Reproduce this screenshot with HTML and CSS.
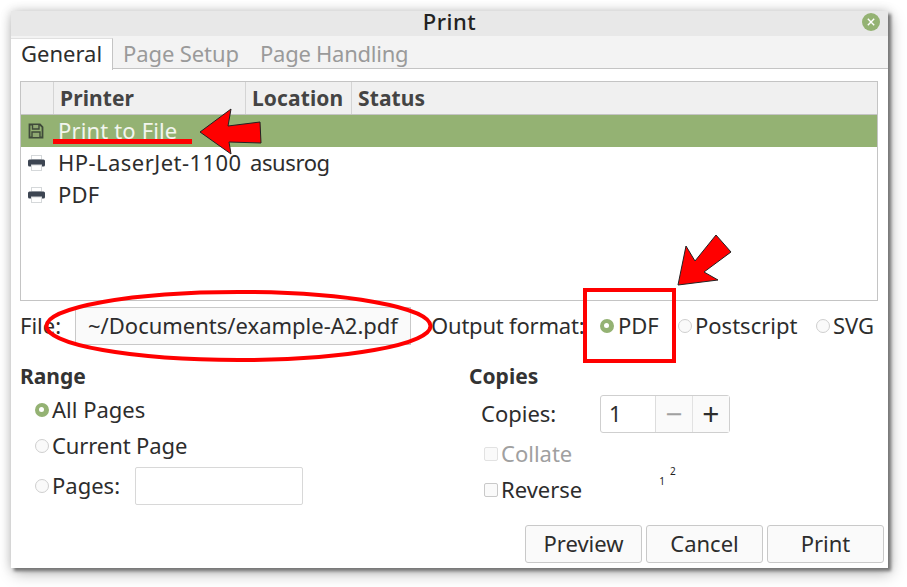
FILE: index.html
```html
<!DOCTYPE html>
<html lang="en">
<head>
<meta charset="utf-8">
<title>Print</title>
<link rel="stylesheet" href="styles.css">
</head>
<body>
<div class="dialog">
  <header class="titlebar">
    <span class="title">Print</span>
    <span class="close"><svg width="18" height="18" viewBox="0 0 18 18"><circle cx="9" cy="9" r="9" fill="#94b273"/><path d="M5.800 5.800l6.400 6.400M12.200 5.800l-6.400 6.400" stroke="#fff" stroke-width="1.400" fill="none"/></svg></span>
  </header>
  <nav class="tabs">
    <span class="tab tab-active">General</span>
    <span class="tab tab-setup">Page Setup</span>
    <span class="tab tab-handling">Page Handling</span>
  </nav>
  <main class="content">
    <section class="tree">
      <div class="tree-row tree-head">
        <span class="cell c-icon"></span>
        <span class="cell c-name">Printer</span>
        <span class="cell c-loc">Location</span>
        <span class="cell c-status">Status</span>
      </div>
      <div class="tree-row selected">
        <span class="cell c-icon"><svg width="16" height="16" viewBox="0 0 16 16"><path d="M1.500 1.500h10.500l2.500 2.500v10.500h-13z" fill="none" stroke="#3f4a3a" stroke-width="1.800"/><path d="M4.500 2v4h6.500v-4M4 14v-5h8v5" fill="#8fa872" stroke="#3f4a3a" stroke-width="1.400"/></svg></span>
        <span class="cell c-name">Print to File</span>
      </div>
      <div class="tree-row">
        <span class="cell c-icon"><svg width="17" height="16" viewBox="0 0 17 16"><rect x="3.500" y="0.500" width="10" height="4" fill="#fff" stroke="#d5d8da"/><rect x="0" y="4.500" width="17" height="7" rx="1.500" fill="#3d4552"/><rect x="3.500" y="10" width="10" height="5.500" fill="#fff" stroke="#d5d8da"/></svg></span>
        <span class="cell c-name name-wide">HP-LaserJet-1100</span>
        <span class="cell c-loc">asusrog</span>
      </div>
      <div class="tree-row">
        <span class="cell c-icon"><svg width="17" height="16" viewBox="0 0 17 16"><rect x="3.500" y="0.500" width="10" height="4" fill="#fff" stroke="#d5d8da"/><rect x="0" y="4.500" width="17" height="7" rx="1.500" fill="#3d4552"/><rect x="3.500" y="10" width="10" height="5.500" fill="#fff" stroke="#d5d8da"/></svg></span>
        <span class="cell c-name">PDF</span>
      </div>
    </section>

    <section class="file-row">
      <span class="file-label">File:</span>
      <span class="file-entry">~/Documents/example-A2.pdf</span>
      <span class="format-label">Output format:</span>
      <span class="radio on r-pdf"></span><span class="opt o-pdf">PDF</span>
      <span class="radio r-ps"></span><span class="opt o-ps">Postscript</span>
      <span class="radio r-svg"></span><span class="opt o-svg">SVG</span>
    </section>

    <section class="options">
      <div class="range">
        <h2 class="heading">Range</h2>
        <div class="line l-all"><span class="radio on"></span><span class="opt">All Pages</span></div>
        <div class="line l-cur"><span class="radio"></span><span class="opt">Current Page</span></div>
        <div class="line l-pages"><span class="radio"></span><span class="opt pages-label">Pages:</span><span class="pages-entry"></span></div>
      </div>
      <div class="copies">
        <h2 class="heading">Copies</h2>
        <div class="line l-copies">
          <span class="copies-label">Copies:</span>
          <span class="spin"><span class="spin-value">1</span><span class="spin-btn minus">−</span><span class="spin-btn plus">+</span></span>
        </div>
        <div class="line l-collate"><span class="check dim"></span><span class="opt muted">Collate</span></div>
        <div class="line l-reverse"><span class="check"></span><span class="opt">Reverse</span>
          <span class="collate-preview"><span class="n1">1</span><span class="n2">2</span></span>
        </div>
      </div>
    </section>

    <footer class="actions">
      <button class="btn">Preview</button>
      <button class="btn">Cancel</button>
      <button class="btn">Print</button>
    </footer>
  </main>
</div>

<svg class="annotations" width="907" height="587" viewBox="0 0 907 587">
  <rect x="53" y="139" width="139" height="5" fill="#f00"/>
  <polygon points="200,132 231,109 228,126 260,122 261,143 229,142 231,154" fill="#f00" stroke="#222" stroke-width="1"/>
  <polygon points="678,285 686,246 695,261 716,235 731,252 704,272 718,280" fill="#f00" stroke="#222" stroke-width="1"/>
  <rect x="585" y="290" width="89" height="71" fill="none" stroke="#f00" stroke-width="4"/>
  <ellipse cx="238.500" cy="326" rx="192" ry="34" fill="none" stroke="#f00" stroke-width="4"/>
</svg>
</body>
</html>
```
FILE: styles.css
```css
* { box-sizing: border-box; }
html, body { margin: 0; padding: 0; }
body {
  width: 907px;
  height: 587px;
  overflow: hidden;
  background: #fff;
  font-family: "Noto Sans", sans-serif;
  font-size: 22px;
  color: #2d2d2d;
  padding: 11px 0 0 11px;
  position: relative;
}
.dialog {
  width: 877px;
  height: 557px;
  background: #fff;
  box-shadow: 3px 3px 3px #777, 0 0 10px rgba(0,0,0,.18), 3px 6px 14px rgba(0,0,0,.25);
}
.titlebar {
  height: 25px;
  background: #e8e8e8;
  display: flex;
  align-items: center;
  justify-content: center;
  position: relative;
}
.title { font-size: 22px; font-weight: 500; letter-spacing: .5px; color: #222; line-height: 25px; margin-top: -4px; }
.close { position: absolute; left: 851px; top: 2px; width: 18px; height: 18px; line-height: 0; }
.tabs {
  height: 33px;
  background: #f3f3f3;
  border-bottom: 1px solid #c4c4c4;
  display: flex;
  align-items: stretch;
}
.tab { display: flex; align-items: center; color: #9a9a9a; padding-top: 1px; }
.tab-active {
  width: 102px;
  padding: 0 0 4px 10px;
  margin-top: 2px;
  background: #fff;
  color: #2d2d2d;
  border-right: 1px solid #c4c4c4;
  border-top: 1px solid #e0e0e0;
  height: 32px;
}
.tab-setup { margin-left: 10px; width: 137px; letter-spacing: -.1px; }
.tab-handling { width: 160px; letter-spacing: -.25px; }
.content { padding: 12px 10px 0 9px; }
.tree {
  height: 220px;
  border: 1px solid #c4c4c4;
  width: 858px;
}
.tree-row { display: flex; height: 32px; align-items: center; }
.tree-head {
  height: 33px;
  background: #f0f0f0;
  border-bottom: 1px solid #c4c4c4;
  font-weight: 700;
  color: #444;
  font-size: 21px;
  letter-spacing: .1px;
}
.cell { display: flex; align-items: center; height: 100%; white-space: nowrap; }
.c-icon { width: 32px; justify-content: center; padding-right: 2px; }
.c-name { width: 192px; padding: 0 0 2px 5px; letter-spacing: .15px; }
.name-wide { letter-spacing: .45px; }
.c-loc { width: 106px; padding: 0 0 2px 5px; }
.tree-row:not(.tree-head) .c-loc { letter-spacing: -.4px; }
.c-status { padding-left: 6px; }
.tree-head .cell + .cell { border-left: 1px solid #d4d4d4; }
.tree-head .c-name { padding: 0 0 0 6px; letter-spacing: .1px; }
.tree-head .c-loc { padding: 0 0 0 6px; }
.selected { background: #94b273; color: #f2f5ee; }

.file-row { display: flex; align-items: center; height: 38px; margin-top: 6px; white-space: nowrap; }
.file-label { width: 55px; padding-bottom: 2px; }
.file-entry {
  width: 336px;
  height: 38px;
  padding: 0 0 2px 12px;
  background: #fafafa;
  border: 1px solid #c9c9c9;
  display: flex;
  align-items: center;
}
.format-label { margin-left: 20px; width: 169px; letter-spacing: -.2px; padding-bottom: 2px; }
.radio {
  flex: none;
  display: inline-block;
  width: 14px;
  height: 14px;
  border-radius: 50%;
  border: 1px solid #cfcfcf;
  background: #fafafa;
}
.radio.on { background: #94b273; border: 4.500px solid #94b273; position: relative; }
.radio.on::after {
  content: "";
  position: absolute;
  left: 0; top: 0;
  width: 5px; height: 5px;
  border-radius: 50%;
  background: #fff;
}
.opt { margin-left: 3px; padding-bottom: 2px; }
.o-pdf { width: 60px; margin-left: 4px; }
.o-ps { width: 121px; margin-left: 3px; }
.o-svg { margin-left: 3px; }

.options { display: flex; height: 166px; margin-top: 14px; }
.range { width: 449px; }
.heading { margin: 0; font-size: 21px; font-weight: 700; color: #333; line-height: 34px; height: 34px; }
.line { display: flex; align-items: center; }
.l-all { margin: 0 0 0 15px; height: 34px; }
.l-cur { margin: 1px 0 0 15px; height: 36px; letter-spacing: -.1px; }
.l-pages { margin: 3px 0 0 15px; height: 38px; }
.pages-label { width: 83px; }
.pages-entry {
  width: 168px;
  height: 38px;
  border: 1px solid #d8d8d8;
  border-radius: 2px;
  background: #fff;
}
.l-copies { margin: 2px 0 0 12px; height: 38px; }
.copies-label { width: 119px; padding-bottom: 2px; }
.spin {
  display: flex;
  width: 130px;
  height: 38px;
  border: 1px solid #cfcfcf;
  border-radius: 3px;
}
.spin-value { width: 56px; padding-left: 8px; line-height: 34px; border-right: 1px solid #ddd; }
.spin-btn { width: 37px; display: flex; align-items: center; justify-content: center; background: #fafafa; font-size: 30px; line-height: 36px; }
.minus { color: #a0a0a0; border-right: 1px solid #e2e2e2; }
.plus { color: #2d2d2d; }
.check {
  flex: none;
  width: 14px;
  height: 14px;
  border: 1px solid #c9c9c9;
  border-radius: 2px;
  background: #fafafa;
}
.check.dim { border-color: #e2e2e2; }
.l-collate { margin: 3px 0 0 15px; height: 36px; }
.l-reverse { margin: 0 0 0 15px; height: 36px; }
.muted { color: #a0a0a0; }
.collate-preview { display: flex; margin: 0 0 28px 77px; font-size: 10px; line-height: 10px; color: #222; gap: 5px; align-items: flex-start; }
.n1 { margin-top: 10px; }
.n2 { margin-top: 0; }

.actions { display: flex; justify-content: flex-end; gap: 4px; margin: 0 -6px 0 0; }
.btn {
  width: 117px;
  height: 38px;
  font: inherit;
  color: #2d2d2d;
  background: #fafafa;
  border: 1px solid #c9c9c9;
  border-radius: 3px;
  padding: 0 0 2px;
}
.annotations { position: absolute; left: 0; top: 0; pointer-events: none; }
```
